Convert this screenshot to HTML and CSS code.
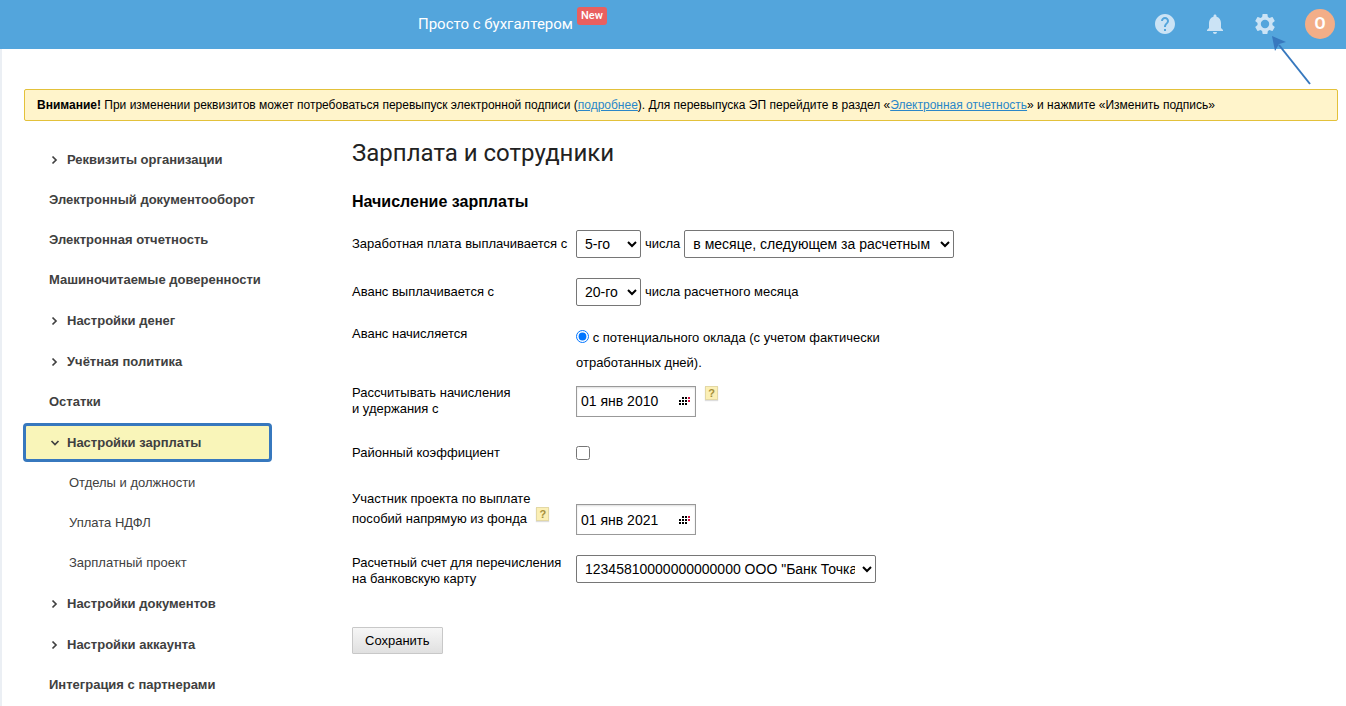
FILE: index.html
```html
<!DOCTYPE html>
<html lang="ru">
  <head>
    <meta charset="UTF-8" />
    <meta name="viewport" content="width=device-width, initial-scale=1.0" />
    <title>Зарплата и сотрудники</title>
    <link rel="stylesheet" href="styles.css">
  </head>
  <body>
    <header class="header">
      <a href="#" class="header-link">Просто с бухгалтером</a>
      <span class="badge-new">New</span>
      <div class="header-tools">
        <button type="button" class="tool" aria-label="Помощь">
          <svg width="24" height="24" viewBox="0 0 24 24"><path d="M12 2C6.48 2 2 6.48 2 12s4.48 10 10 10 10-4.48 10-10S17.52 2 12 2zm1 17h-2v-2h2v2zm2.07-7.75l-.9.92C13.45 12.9 13 13.5 13 15h-2v-.5c0-1.1.45-2.1 1.17-2.83l1.24-1.26c.37-.36.59-.86.59-1.41 0-1.1-.9-2-2-2s-2 .9-2 2H8c0-2.21 1.79-4 4-4s4 1.79 4 4c0 .88-.36 1.68-.93 2.25z"/></svg>
        </button>
        <button type="button" class="tool" aria-label="Уведомления">
          <svg width="24" height="24" viewBox="0 0 24 24"><path d="M12 22c1.1 0 2-.9 2-2h-4c0 1.1.89 2 2 2zm6-6v-5c0-3.07-1.64-5.64-4.5-6.32V4c0-.83-.67-1.5-1.5-1.5s-1.5.67-1.5 1.5v.68C7.63 5.36 6 7.92 6 11v5l-2 2v1h16v-1l-2-2z"/></svg>
        </button>
        <div class="tool-settings">
          <button type="button" class="tool" aria-label="Настройки">
            <svg width="24" height="24" viewBox="0 0 24 24"><path d="M19.43 12.98c.04-.32.07-.64.07-.98s-.03-.66-.07-.98l2.11-1.65c.19-.15.24-.42.12-.64l-2-3.46c-.12-.22-.39-.3-.61-.22l-2.49 1c-.52-.4-1.08-.73-1.69-.98l-.38-2.65C14.46 2.18 14.25 2 14 2h-4c-.25 0-.46.18-.49.42l-.38 2.65c-.61.25-1.17.59-1.69.98l-2.49-1c-.23-.09-.49 0-.61.22l-2 3.46c-.13.22-.07.49.12.64l2.11 1.65c-.04.32-.07.65-.07.98s.03.66.07.98l-2.11 1.65c-.19.15-.24.42-.12.64l2 3.46c.12.22.39.3.61.22l2.49-1c.52.4 1.08.73 1.69.98l.38 2.65c.03.24.24.42.49.42h4c.25 0 .46-.18.49-.42l.38-2.65c.61-.25 1.17-.59 1.69-.98l2.49 1c.23.09.49 0 .61-.22l2-3.46c.12-.22.07-.49-.12-.64l-2.11-1.65zM12 16.2a4.2 4.2 0 1 1 0-8.4 4.2 4.2 0 0 1 0 8.4z"/></svg>
          </button>
          <svg class="pointer" width="40" height="50" viewBox="0 0 40 50"><path d="M7 9L38 48" fill="none" stroke="#3778be" stroke-width="2"/><path d="M0 0L14 6 7 8 3 15z" fill="#3778be"/></svg>
        </div>
        <button type="button" class="avatar">О</button>
      </div>
    </header>

    <main class="page">
      <div class="notice">
        <b>Внимание!</b> При изменении реквизитов может потребоваться перевыпуск электронной подписи (<a href="#">подробнее</a>). Для перевыпуска ЭП перейдите в раздел «<a href="#">Электронная отчетность</a>» и нажмите «Изменить подпись»
      </div>

      <div class="columns">
        <nav class="menu">
          <a href="#" class="menu-item group"><svg class="arrow" width="12" height="12" viewBox="0 0 12 12"><path d="M3.5 2.5L7 6 3.5 9.5"/></svg>Реквизиты организации</a>
          <a href="#" class="menu-item">Электронный документооборот</a>
          <a href="#" class="menu-item">Электронная отчетность</a>
          <a href="#" class="menu-item">Машиночитаемые доверенности</a>
          <a href="#" class="menu-item group"><svg class="arrow" width="12" height="12" viewBox="0 0 12 12"><path d="M3.5 2.5L7 6 3.5 9.5"/></svg>Настройки денег</a>
          <a href="#" class="menu-item group"><svg class="arrow" width="12" height="12" viewBox="0 0 12 12"><path d="M3.5 2.5L7 6 3.5 9.5"/></svg>Учётная политика</a>
          <a href="#" class="menu-item">Остатки</a>
          <a href="#" class="menu-item group active"><svg class="arrow" width="12" height="12" viewBox="0 0 12 12"><path d="M2.5 4L6 7.5 9.5 4"/></svg>Настройки зарплаты</a>
          <a href="#" class="menu-item sub">Отделы и должности</a>
          <a href="#" class="menu-item sub">Уплата НДФЛ</a>
          <a href="#" class="menu-item sub">Зарплатный проект</a>
          <a href="#" class="menu-item group"><svg class="arrow" width="12" height="12" viewBox="0 0 12 12"><path d="M3.5 2.5L7 6 3.5 9.5"/></svg>Настройки документов</a>
          <a href="#" class="menu-item group"><svg class="arrow" width="12" height="12" viewBox="0 0 12 12"><path d="M3.5 2.5L7 6 3.5 9.5"/></svg>Настройки аккаунта</a>
          <a href="#" class="menu-item">Интеграция с партнерами</a>
        </nav>

        <form class="content">
          <h1 class="title">Зарплата и сотрудники</h1>
          <h2 class="subtitle">Начисление зарплаты</h2>

          <div class="row">
            <label class="label" for="salaryDay">Заработная плата выплачивается с</label>
            <div class="field">
              <select id="salaryDay" class="select day"><option>5-го</option></select>
              <label for="salaryMonth">числа</label>
              <select id="salaryMonth" class="select month"><option>в месяце, следующем за расчетным</option></select>
            </div>
          </div>

          <div class="row">
            <label class="label" for="advanceDay">Аванс выплачивается с</label>
            <div class="field">
              <select id="advanceDay" class="select day"><option>20-го</option></select>
              <span>числа расчетного месяца</span>
            </div>
          </div>

          <div class="row row-advance">
            <span class="label">Аванс начисляется</span>
            <div class="radio-field">
              <input type="radio" id="advanceType" class="radio" name="advanceType" checked />
              <label for="advanceType">с потенциального оклада (с учетом фактически отработанных дней).</label>
            </div>
          </div>

          <div class="row">
            <label class="label" for="startDate">Рассчитывать начисления<br />и удержания с</label>
            <div class="field field-date">
              <div class="date">
                <input type="text" id="startDate" class="date-input" value="01 янв 2010" />
                <svg width="12" height="8" viewBox="0 0 12 8"><path d="M3 0h2v2H3zM6 0h2v2H6zM0 3h2v2H0zM3 3h2v2H3zM6 3h2v2H6zM0 6h2v2H0zM3 6h2v2H3zM6 6h2v2H6z"/><path class="weekend" d="M9 0h2v2H9zM9 3h2v2H9z"/></svg>
              </div>
              <button type="button" class="help">?</button>
            </div>
          </div>

          <div class="row row-check">
            <label class="label" for="districtRate">Районный коэффициент</label>
            <input type="checkbox" id="districtRate" class="checkbox" />
          </div>

          <div class="row row-project">
            <div class="label label-help">
              <label for="projectDate">Участник проекта по выплате<br />пособий напрямую из фонда</label>
              <button type="button" class="help">?</button>
            </div>
            <div class="date">
              <input type="text" id="projectDate" class="date-input" value="01 янв 2021" />
              <svg width="12" height="8" viewBox="0 0 12 8"><path d="M3 0h2v2H3zM6 0h2v2H6zM0 3h2v2H0zM3 3h2v2H3zM6 3h2v2H6zM0 6h2v2H0zM3 6h2v2H3zM6 6h2v2H6z"/><path class="weekend" d="M9 0h2v2H9zM9 3h2v2H9z"/></svg>
            </div>
          </div>

          <div class="row row-account">
            <label class="label" for="account">Расчетный счет для перечисления<br />на банковскую карту</label>
            <select id="account" class="select account"><option>12345810000000000000 ООО "Банк Точка"</option></select>
          </div>

          <button type="submit" class="btn">Сохранить</button>
        </form>
      </div>
    </main>
  </body>
</html>
```
FILE: styles.css
```css
* {
  box-sizing: border-box;
}
body {
  display: flex;
  flex-direction: column;
  min-height: 100vh;
  margin: 0;
  background-color: #fff;
  color: #000;
  font-family: "Liberation Sans", Arial, sans-serif;
  font-size: 13px;
  line-height: 16px;
}
button {
  padding: 0;
  border: none;
  background: none;
  cursor: pointer;
}
.header {
  display: flex;
  flex: none;
  align-items: center;
  height: 49px;
  padding: 0 11px 2px 418px;
  background-color: #53a5dc;
}
.header-link {
  color: #fff;
  font-family: Roboto, sans-serif;
  font-size: 15px;
  text-decoration: none;
}
.badge-new {
  align-self: flex-start;
  margin: 7px 0 0 4px;
  padding: 0 4px;
  border-radius: 3px;
  background-color: #e9605f;
  color: #fff;
  font-family: Roboto, sans-serif;
  font-size: 11px;
  font-weight: 500;
  line-height: 18px;
}
.header-tools {
  display: flex;
  align-items: center;
  gap: 26px;
  margin-left: auto;
}
.tool {
  display: block;
  height: 24px;
}
.tool svg {
  display: block;
  fill: #cbe3f5;
}
.tool-settings {
  position: relative;
}
.pointer {
  position: absolute;
  top: 24px;
  left: 19px;
  pointer-events: none;
}
.avatar {
  width: 30px;
  height: 30px;
  margin-left: 2px;
  border-radius: 50%;
  background-color: #f3ae88;
  color: #fff;
  font-family: Roboto, sans-serif;
  font-size: 16px;
  font-weight: 700;
}
.page {
  flex: 1;
  padding: 40px 8px 0 22px;
  border-left: 2px solid #ebeff4;
}
.notice {
  padding: 7px 12px;
  border: 1px solid #e3c13a;
  border-radius: 2px;
  background-color: #fff4cb;
  font-size: 12px;
}
.notice a {
  color: #2b87c8;
}
.columns {
  display: flex;
  gap: 80px;
  padding-top: 17px;
}
.menu {
  flex: none;
  width: 248px;
  padding-top: 1px;
}
.menu-item {
  display: flex;
  align-items: center;
  height: 40px;
  padding-left: 25px;
  color: #404040;
  font-weight: 700;
  text-decoration: none;
}
.menu-item.group {
  height: 41px;
}
.menu-item.active {
  height: 39px;
  margin: 1px 0 1px -1px;
  border: 3px solid #3778be;
  border-radius: 4px;
  padding-left: 23px;
  background-color: #f9f5b9;
}
.menu-item.sub {
  padding-left: 45px;
  font-weight: 400;
}
.arrow {
  margin-right: 6px;
  fill: none;
  stroke: #404040;
  stroke-width: 1.7;
}
.content {
  flex: 1;
}
.title {
  margin: 0 0 24px;
  color: #222;
  font-family: Roboto, sans-serif;
  font-size: 24px;
  font-weight: 400;
  line-height: 30px;
}
.subtitle {
  margin: 0 0 18px;
  font-size: 16px;
  line-height: 20px;
}
.row {
  display: flex;
  align-items: center;
  margin-bottom: 20px;
}
.label {
  flex: none;
  width: 224px;
}
.field {
  display: flex;
  align-items: center;
  gap: 4px;
}
.select {
  height: 28px;
  padding: 0 4px;
  border: 1px solid #767676;
  border-radius: 2px;
  background-color: #fff;
  font-family: inherit;
  font-size: 14px;
}
.day {
  width: 65px;
}
.month {
  width: 270px;
}
.account {
  width: 300px;
}
.row-advance {
  align-items: flex-start;
  margin-bottom: 10px;
}
.radio-field {
  max-width: 320px;
  margin-top: -1px;
  line-height: 25px;
}
.radio {
  margin: 0;
  vertical-align: -1px;
}
.field-date {
  align-items: flex-start;
  gap: 9px;
}
.date {
  display: flex;
  align-items: center;
  width: 120px;
  height: 31px;
  padding: 0 4px;
  border: 1px solid #999;
  box-shadow: inset 0 1px 2px #ddd;
}
.date-input {
  flex: 1;
  min-width: 0;
  padding: 0;
  border: none;
  background: none;
  font-family: inherit;
  font-size: 14px;
}
.weekend {
  fill: #d0103f;
}
.help {
  width: 13px;
  height: 14px;
  border: 1px solid #e3d8a5;
  background-color: #fbefb5;
  box-shadow: 0 1px 1px #ddd;
  color: #a58f3c;
  font-size: 11px;
  font-weight: 700;
  line-height: 12px;
}
.row-check {
  height: 32px;
}
.checkbox {
  width: 14px;
  height: 14px;
  margin: 0;
}
.row-project {
  align-items: flex-end;
  height: 46px;
}
.label-help {
  display: flex;
  align-items: flex-end;
  gap: 6px;
  height: 46px;
  padding-bottom: 6px;
  line-height: 20px;
}
.label-help .help {
  margin-bottom: 8px;
}
.row-account {
  align-items: flex-start;
  margin-bottom: 40px;
}
.btn {
  padding: 0 12px;
  border: 1px solid #c8c8c8;
  border-radius: 1px;
  background-image: linear-gradient(#f6f6f6, #e0e0e0);
  font-family: inherit;
  font-size: 13px;
  line-height: 25px;
}
```
